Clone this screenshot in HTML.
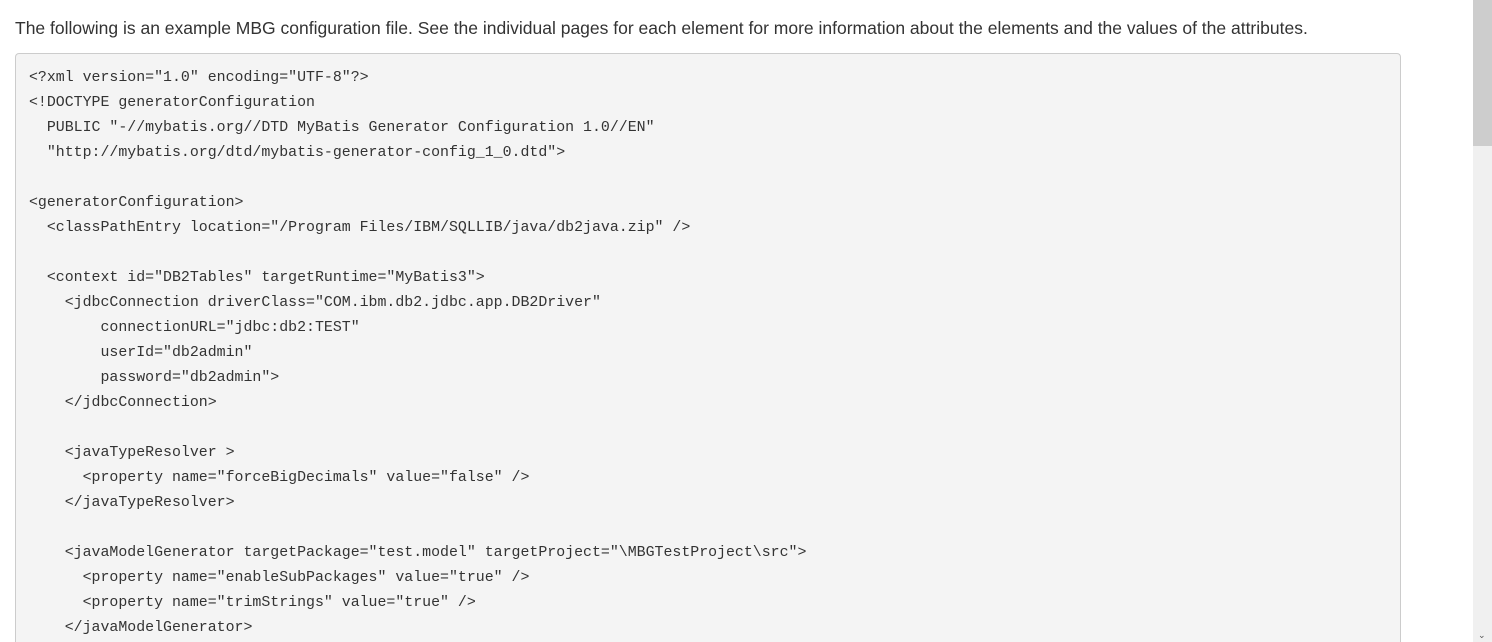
<!DOCTYPE html>
<html><head><meta charset="utf-8"><style>
html,body{margin:0;padding:0;background:#fff;overflow:hidden;width:1492px;height:642px}
body{font-family:"Liberation Sans",Arial,sans-serif;color:#333;position:relative}
p{position:absolute;left:15px;top:17px;margin:0;font-size:17.5px;line-height:22px;white-space:nowrap}
pre{position:absolute;left:15px;top:53px;width:1386px;height:589px;overflow:hidden;margin:0;box-sizing:border-box;background:#f4f4f4;border:1px solid #ccc;border-bottom:none;border-radius:4px 4px 0 0;padding:12px 13px;font-family:"Liberation Mono",monospace;font-size:14.9px;line-height:25px;color:#333;white-space:pre}
.sb{position:absolute;left:1473px;top:0;width:19px;height:642px;background:#f0f0f0}
.th{position:absolute;left:1473px;top:0;width:19px;height:146px;background:#cdcdcd}
.ar{position:absolute;left:1478px;top:630px;font-size:9px;line-height:10px;color:#555}
</style></head><body>
<p>The following is an example MBG configuration file. See the individual pages for each element for more information about the elements and the values of the attributes.</p>
<pre>&lt;?xml version="1.0" encoding="UTF-8"?&gt;
&lt;!DOCTYPE generatorConfiguration
  PUBLIC "-//mybatis.org//DTD MyBatis Generator Configuration 1.0//EN"
  "http://mybatis.org/dtd/mybatis-generator-config_1_0.dtd"&gt;

&lt;generatorConfiguration&gt;
  &lt;classPathEntry location="/Program Files/IBM/SQLLIB/java/db2java.zip" /&gt;

  &lt;context id="DB2Tables" targetRuntime="MyBatis3"&gt;
    &lt;jdbcConnection driverClass="COM.ibm.db2.jdbc.app.DB2Driver"
        connectionURL="jdbc:db2:TEST"
        userId="db2admin"
        password="db2admin"&gt;
    &lt;/jdbcConnection&gt;

    &lt;javaTypeResolver &gt;
      &lt;property name="forceBigDecimals" value="false" /&gt;
    &lt;/javaTypeResolver&gt;

    &lt;javaModelGenerator targetPackage="test.model" targetProject="\MBGTestProject\src"&gt;
      &lt;property name="enableSubPackages" value="true" /&gt;
      &lt;property name="trimStrings" value="true" /&gt;
    &lt;/javaModelGenerator&gt;
</pre>
<div class="sb"></div><div class="th"></div><div class="ar">&#8964;</div>
</body></html>
